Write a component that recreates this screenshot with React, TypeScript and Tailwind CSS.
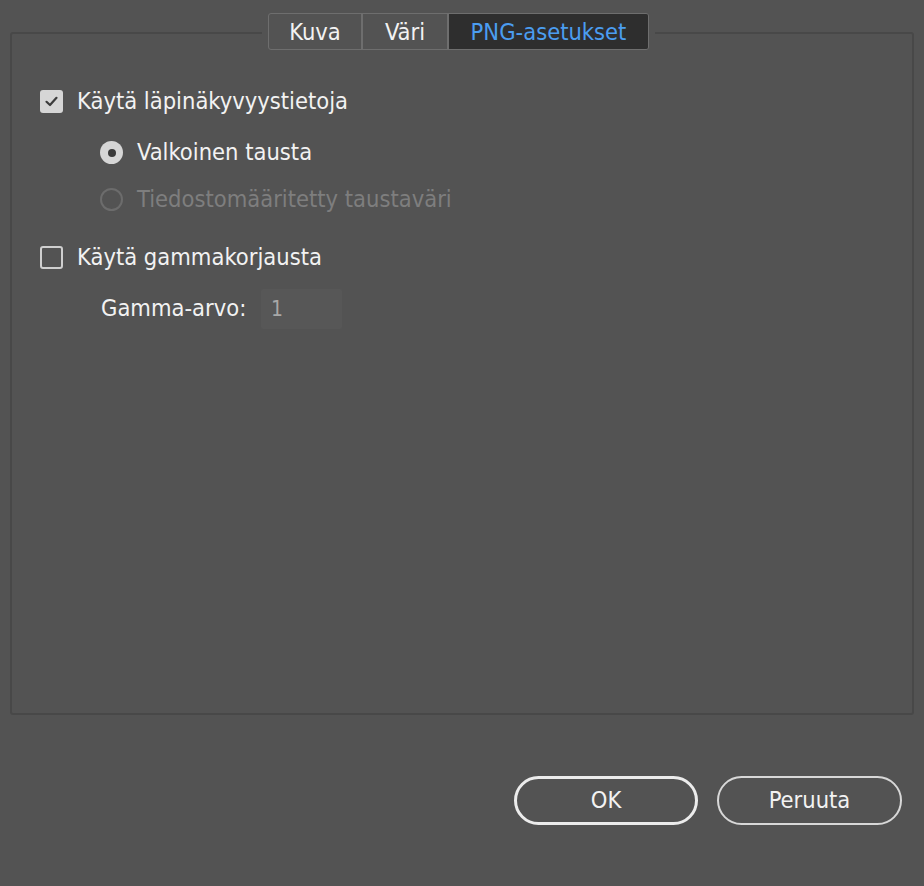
import React from "react";

const font = { fontFamily: '"DejaVu Sans Condensed", "DejaVu Sans", sans-serif', fontStretch: "condensed" as const };

function Checkbox({ checked }: { checked: boolean }) {
  return checked ? (
    <div className="w-[23px] h-[23px] rounded-[3px] bg-[#d6d6d6] flex items-center justify-center">
      <svg width="15" height="15" viewBox="0 0 15 15">
        <path d="M2.5 7.8 L6 11 L12.5 3.8" fill="none" stroke="#3c3c3c" strokeWidth="2.2" strokeLinecap="round" strokeLinejoin="round" />
      </svg>
    </div>
  ) : (
    <div className="w-[23px] h-[23px] rounded-[3px] border-2 border-[#cfcfcf] bg-transparent" />
  );
}

function Radio({ checked, disabled }: { checked: boolean; disabled?: boolean }) {
  if (checked)
    return (
      <div className="w-[23px] h-[23px] rounded-full bg-[#d6d6d6] flex items-center justify-center">
        <div className="w-[8px] h-[8px] rounded-full bg-[#3a3a3a]" />
      </div>
    );
  return <div className={`w-[23px] h-[23px] rounded-full border-2 ${disabled ? "border-[#6c6c6c]" : "border-[#cfcfcf]"}`} />;
}

export default function App() {
  return (
    <div className="w-[924px] h-[886px] bg-[#535353] text-[#f2f2f2] text-[23.5px] leading-none flex flex-col" style={font}>
      <div className="pt-[13px] px-[10px] flex flex-col">
        <div className="flex justify-center relative z-10 pr-[7px]">
          <div className="flex bg-[#535353] px-[6px]">
            <div className="flex h-[37px] border border-[#6e6e6e] rounded-[3px] overflow-hidden">
              <div className="w-[94px] flex items-center justify-center border-r-2 border-[#6e6e6e] pt-[3px]">Kuva</div>
              <div className="w-[86px] flex items-center justify-center border-r-2 border-[#6e6e6e] pt-[3px]">Väri</div>
              <div className="w-[199px] flex items-center justify-center bg-[#2e2e2e] text-[#4b9df0] pt-[3px]">PNG-asetukset</div>
            </div>
          </div>
        </div>
        <div className="-mt-[18px] h-[683px] border-2 border-[#484848] rounded-[3px] flex flex-col pl-[28px] pt-[56px]">
          <div className="flex items-center h-[23px] gap-[14px]">
            <Checkbox checked />
            <span>Käytä läpinäkyvyystietoja</span>
          </div>
          <div className="flex items-center h-[23px] gap-[14px] mt-[28px] pl-[60px]">
            <Radio checked />
            <span>Valkoinen tausta</span>
          </div>
          <div className="flex items-center h-[23px] gap-[14px] mt-[24px] pl-[60px] text-[#7e7e7e]">
            <Radio checked={false} disabled />
            <span>Tiedostomääritetty taustaväri</span>
          </div>
          <div className="flex items-center h-[23px] gap-[14px] mt-[35px]">
            <Checkbox checked={false} />
            <span>Käytä gammakorjausta</span>
          </div>
          <div className="flex items-center mt-[20px] pl-[61px] h-[40px]">
            <span className="w-[160px]">Gamma-arvo:</span>
            <div className="w-[81px] h-[40px] bg-[#575757] rounded-[2px] flex items-center pl-[10px] text-[#a8a8a8] text-[21px]">1</div>
          </div>
        </div>
      </div>
      <div className="flex justify-end gap-[19px] pr-[22px] mt-[61px]">
        <button className="w-[184px] h-[49px] rounded-full border-[3px] border-[#ececec] flex items-center justify-center text-[#f2f2f2]">OK</button>
        <button className="w-[185px] h-[49px] rounded-full border-2 border-[#d8d8d8] flex items-center justify-center text-[#f2f2f2]">Peruuta</button>
      </div>
    </div>
  );
}
